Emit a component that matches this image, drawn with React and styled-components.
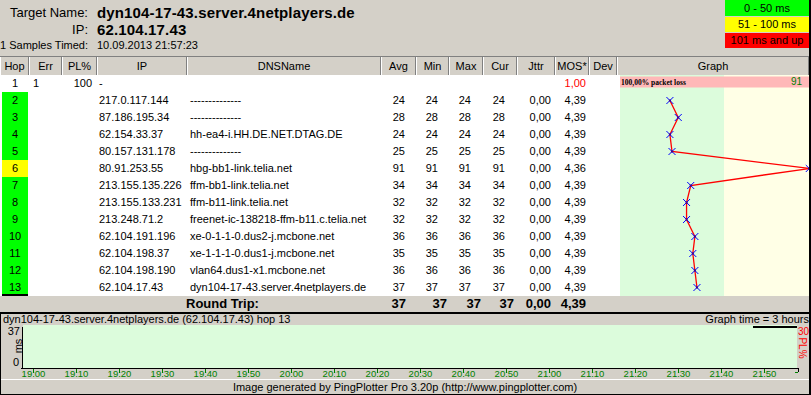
import React from 'react';
import styled, { createGlobalStyle } from 'styled-components';

const GlobalStyle = createGlobalStyle`
   html, body {
      margin: 0;
      padding: 0;
      background: #d4d0c8;
   }
   body {
      font-family: "Liberation Sans", Arial, sans-serif;
      font-size: 11px;
      color: #000;
   }
`;

const COLS = [
   { key: 'hop', w: 29, label: 'Hop' },
   { key: 'err', w: 33, label: 'Err', align: 'left', pl: 4 },
   { key: 'pl', w: 35, label: 'PL%', align: 'right', pr: 5 },
   { key: 'ip', w: 90, label: 'IP', align: 'left', pl: 2 },
   { key: 'dns', w: 194, label: 'DNSName', align: 'left', pl: 3 },
   { key: 'avg', w: 35, label: 'Avg', align: 'right', pr: 11 },
   { key: 'min', w: 33, label: 'Min', align: 'right', pr: 11 },
   { key: 'max', w: 34, label: 'Max', align: 'right', pr: 12 },
   { key: 'cur', w: 34, label: 'Cur', align: 'right', pr: 12 },
   { key: 'jttr', w: 38, label: 'Jttr', align: 'right', pr: 4 },
   { key: 'mos', w: 34, label: 'MOS*', align: 'right', pr: 3 },
   { key: 'dev', w: 28, label: 'Dev', align: 'right', pr: 3 },
];

const GRID = COLS.map((c) => `${c.w}px`).join(' ');
const DASH = '--------------';

const HOPS = [
   { hop: 1, err: '1', pl: '100', ip: '-', dns: '', mos: '1,00', bad: true },
   { hop: 2, ip: '217.0.117.144', dns: DASH, ms: 24 },
   { hop: 3, ip: '87.186.195.34', dns: DASH, ms: 28 },
   { hop: 4, ip: '62.154.33.37', dns: 'hh-ea4-i.HH.DE.NET.DTAG.DE', ms: 24 },
   { hop: 5, ip: '80.157.131.178', dns: DASH, ms: 25 },
   { hop: 6, ip: '80.91.253.55', dns: 'hbg-bb1-link.telia.net', ms: 91, mos: '4,36' },
   { hop: 7, ip: '213.155.135.226', dns: 'ffm-bb1-link.telia.net', ms: 34 },
   { hop: 8, ip: '213.155.133.231', dns: 'ffm-b11-link.telia.net', ms: 32 },
   { hop: 9, ip: '213.248.71.2', dns: 'freenet-ic-138218-ffm-b11.c.telia.net', ms: 32 },
   { hop: 10, ip: '62.104.191.196', dns: 'xe-0-1-1-0.dus2-j.mcbone.net', ms: 36 },
   { hop: 11, ip: '62.104.198.37', dns: 'xe-1-1-1-0.dus1-j.mcbone.net', ms: 35 },
   { hop: 12, ip: '62.104.198.190', dns: 'vlan64.dus1-x1.mcbone.net', ms: 36 },
   { hop: 13, ip: '62.104.17.43', dns: 'dyn104-17-43.server.4netplayers.de', ms: 37, selected: true },
];

const hopColor = (ms) => {
   if (ms == null) return 'transparent';
   if (ms <= 50) return '#00ff00';
   if (ms <= 100) return '#ffff00';
   return '#ff0000';
};

const ROW_H = 17;
const toX = (ms) => 3 + ms * 2.08;

const App = () => {
   const points = HOPS.map((h, i) => (h.ms == null ? null : { x: toX(h.ms), y: i * ROW_H + 8.5 })).filter(Boolean);
   // 19:00 .. 21:50, one tick every 10 minutes
   const ticks = Array.from({ length: 18 }, (_, k) => {
      const m = 19 * 60 + k * 10;
      return { x: 32 + k * 43, label: `${Math.floor(m / 60)}:${String(m % 60).padStart(2, '0')}` };
   });

   return (
      <Frame>
         <GlobalStyle />
         <TopBar>
            <InfoGrid>
               <InfoLabel size={13}>Target Name:</InfoLabel>
               <InfoValue bold>dyn104-17-43.server.4netplayers.de</InfoValue>
               <InfoLabel size={13}>IP:</InfoLabel>
               <InfoValue bold>62.104.17.43</InfoValue>
               <InfoLabel size={11}>1 Samples Timed:</InfoLabel>
               <InfoValue>10.09.2013 21:57:23</InfoValue>
            </InfoGrid>
            <Legend>
               <LegendBox color="#00ff00" h={16}>0 - 50 ms</LegendBox>
               <LegendBox color="#ffff00" h={15}>51 - 100 ms</LegendBox>
               <LegendBox color="#ff0000" h={15}>101 ms and up</LegendBox>
            </Legend>
         </TopBar>

         <TableHead>
            {COLS.map((c) => (
               <HeadCell key={c.key}>{c.label}</HeadCell>
            ))}
            <HeadCell>Graph</HeadCell>
         </TableHead>

         <TableBody>
            <Rows>
               {HOPS.map((h) => {
                  const v = h.ms != null ? String(h.ms) : '';
                  const vals = {
                     err: h.err || '',
                     pl: h.pl || '',
                     ip: h.ip,
                     dns: h.dns,
                     avg: v,
                     min: v,
                     max: v,
                     cur: v,
                     jttr: h.ms != null ? '0,00' : '',
                     mos: h.mos || '4,39',
                     dev: '',
                  };
                  return (
                     <Row key={h.hop}>
                        <HopCell color={hopColor(h.ms)} selected={h.selected}>{h.hop}</HopCell>
                        {COLS.slice(1).map((c) => (
                           <Cell key={c.key} align={c.align} pl={c.pl} pr={c.pr} red={c.key === 'mos' && h.bad}>
                              {vals[c.key]}
                           </Cell>
                        ))}
                     </Row>
                  );
               })}
            </Rows>
            <GraphPanel viewBox="0 0 192 221">
               <rect x="3" y="0" width="104" height="221" fill="#dcfcdc" />
               <rect x="107" y="0" width="85" height="221" fill="#ffffe6" />
               <rect x="3" y="1.5" width="189" height="11" fill="#ffb8b8" />
               <text x="4" y="9.5" fontFamily="Liberation Serif, serif" fontWeight="bold" fontSize="7.5" fill="#000">
                  100,00% packet loss
               </text>
               <text x="185" y="9.5" textAnchor="end" fontFamily="Liberation Sans, sans-serif" fontSize="10" fill="#008000">
                  91
               </text>
               <polyline
                  points={points.map((p) => `${p.x},${p.y}`).join(' ')}
                  fill="none"
                  stroke="#ff0000"
                  strokeWidth="1.3"
               />
               {points.map((p, i) => (
                  <g key={i}>
                     <path
                        d={`M${p.x - 3.5} ${p.y - 3.5}L${p.x + 3.5} ${p.y + 3.5}M${p.x + 3.5} ${p.y - 3.5}L${p.x - 3.5} ${p.y + 3.5}`}
                        stroke="#0000ff"
                        strokeWidth="1"
                     />
                     <rect x={p.x - 1} y={p.y - 1} width="2" height="2" fill="#400090" />
                  </g>
               ))}
            </GraphPanel>
         </TableBody>

         <RoundTrip>
            <RoundLabel>Round Trip:</RoundLabel>
            <RoundValue pr={10}>37</RoundValue>
            <RoundValue pr={2}>37</RoundValue>
            <RoundValue pr={2}>37</RoundValue>
            <RoundValue pr={3}>37</RoundValue>
            <RoundValue pr={4}>0,00</RoundValue>
            <RoundValue pr={3}>4,39</RoundValue>
         </RoundTrip>

         <Bottom>
            <TitleBar>
               <span>dyn104-17-43.server.4netplayers.de (62.104.17.43) hop 13</span>
               <span>Graph time = 3 hours</span>
            </TitleBar>
            <ChartSvg viewBox="0 0 808 54">
               <rect x="22" y="0" width="774" height="43" fill="#dcfcdc" />
               <rect x="752" y="1" width="44" height="2" fill="#000" />
               <line x1="21.5" y1="2" x2="21.5" y2="44" stroke="#000" />
               <line x1="20" y1="43.5" x2="797" y2="43.5" stroke="#000" />
               <line x1="797.5" y1="43" x2="797.5" y2="47" stroke="#000" />
               <path d="M794 47.5h3" stroke="#008000" />
               <g fill="#008000" fontFamily="Liberation Sans, sans-serif" fontSize="9.5">
                  {ticks.map((t) => (
                     <g key={t.label}>
                        <line x1={t.x + 0.5} y1="44" x2={t.x + 0.5} y2="48" stroke="#008000" />
                        <text x={t.x + 0.5} y="52" textAnchor="middle">{t.label}</text>
                     </g>
                  ))}
               </g>
               <g fontFamily="Liberation Sans, sans-serif" fontSize="11">
                  <text x="19" y="10" textAnchor="end">37</text>
                  <text x="18" y="41" textAnchor="end">0</text>
                  <text x="0" y="0" textAnchor="middle" transform="translate(21 21) rotate(-90)">ms</text>
               </g>
               <g fill="#ff0000" fontFamily="Liberation Sans, sans-serif" fontSize="10">
                  <text x="797" y="10">30</text>
                  <text x="0" y="0" textAnchor="middle" transform="translate(798 23) rotate(90)">PL%</text>
               </g>
            </ChartSvg>
            <Footer>Image generated by PingPlotter Pro 3.20p (http://www.pingplotter.com)</Footer>
         </Bottom>
      </Frame>
   );
};

const Frame = styled.div`
   width: 811px;
   height: 395px;
   box-sizing: border-box;
   border-right: 2px solid #000;
   display: flex;
   flex-direction: column;
   overflow: hidden;
`;

const TopBar = styled.div`
   height: 56px;
   display: flex;
   justify-content: space-between;
   align-items: flex-start;
`;

const InfoGrid = styled.div`
   display: grid;
   grid-template-columns: 88px auto;
   grid-template-rows: 17px 16px 16px;
   column-gap: 9px;
   padding-top: 4px;
   align-items: center;
`;

const InfoLabel = styled.div`
   text-align: right;
   font-size: ${(p) => p.size}px;
   white-space: nowrap;
`;

const InfoValue = styled.div`
   font-size: ${(p) => (p.bold ? 15 : 11)}px;
   font-weight: ${(p) => (p.bold ? 700 : 400)};
   letter-spacing: ${(p) => (p.bold ? '0.15px' : '0')};
   white-space: nowrap;
`;

const Legend = styled.div`
   width: 84px;
   display: flex;
   flex-direction: column;
   gap: 1px;
`;

const LegendBox = styled.div`
   height: ${(p) => p.h}px;
   line-height: ${(p) => p.h}px;
   background: ${(p) => p.color};
   text-align: center;
   font-size: 11px;
`;

const TableHead = styled.div`
   display: grid;
   grid-template-columns: ${GRID} 1fr;
   height: 18px;
   border-top: 1px solid #808080;
`;

const HeadCell = styled.div`
   box-sizing: border-box;
   border-left: 1px solid #fff;
   border-right: 1px solid #808080;
   line-height: 18px;
   text-align: center;
   white-space: nowrap;
   overflow: hidden;
`;

const TableBody = styled.div`
   display: flex;
   height: 221px;
   background: #fff;
`;

const Rows = styled.div`
   width: 617px;
   flex: none;
`;

const Row = styled.div`
   display: grid;
   grid-template-columns: ${GRID};
   height: ${ROW_H}px;
   line-height: ${ROW_H}px;
`;

const HopCell = styled.div`
   margin: 0 1px 0 2px;
   background: ${(p) => p.color};
   text-align: center;
   box-shadow: ${(p) => (p.selected ? 'inset 0 -2px 0 #000' : 'none')};
`;

const Cell = styled.div`
   padding-left: ${(p) => p.pl || 0}px;
   padding-right: ${(p) => p.pr || 0}px;
   text-align: ${(p) => p.align || 'left'};
   color: ${(p) => (p.red ? '#ff0000' : '#000')};
   white-space: nowrap;
   overflow: hidden;
`;

const GraphPanel = styled.svg`
   display: block;
   width: 192px;
   height: 221px;
   flex: none;
`;

const RoundTrip = styled.div`
   display: grid;
   grid-template-columns: 381px 35px 33px 34px 34px 38px 34px;
   height: 16px;
   line-height: 16px;
   font-size: 13px;
   font-weight: 700;
`;

const RoundLabel = styled.div`
   padding-left: 186px;
`;

const RoundValue = styled.div`
   text-align: right;
   padding-right: ${(p) => p.pr}px;
`;

const Bottom = styled.div`
   flex: 1;
   border-top: 2px solid #000;
   border-left: 1px solid #000;
   border-bottom: 1px solid #000;
   display: flex;
   flex-direction: column;
`;

const TitleBar = styled.div`
   height: 11px;
   line-height: 11px;
   display: flex;
   justify-content: space-between;
   padding-left: 2px;
   white-space: nowrap;
`;

const ChartSvg = styled.svg`
   display: block;
   width: 808px;
   height: 54px;
`;

const Footer = styled.div`
   flex: 1;
   border-top: 1px solid #fff;
   text-align: center;
   line-height: 14px;
   font-size: 11px;
`;

export default App;
